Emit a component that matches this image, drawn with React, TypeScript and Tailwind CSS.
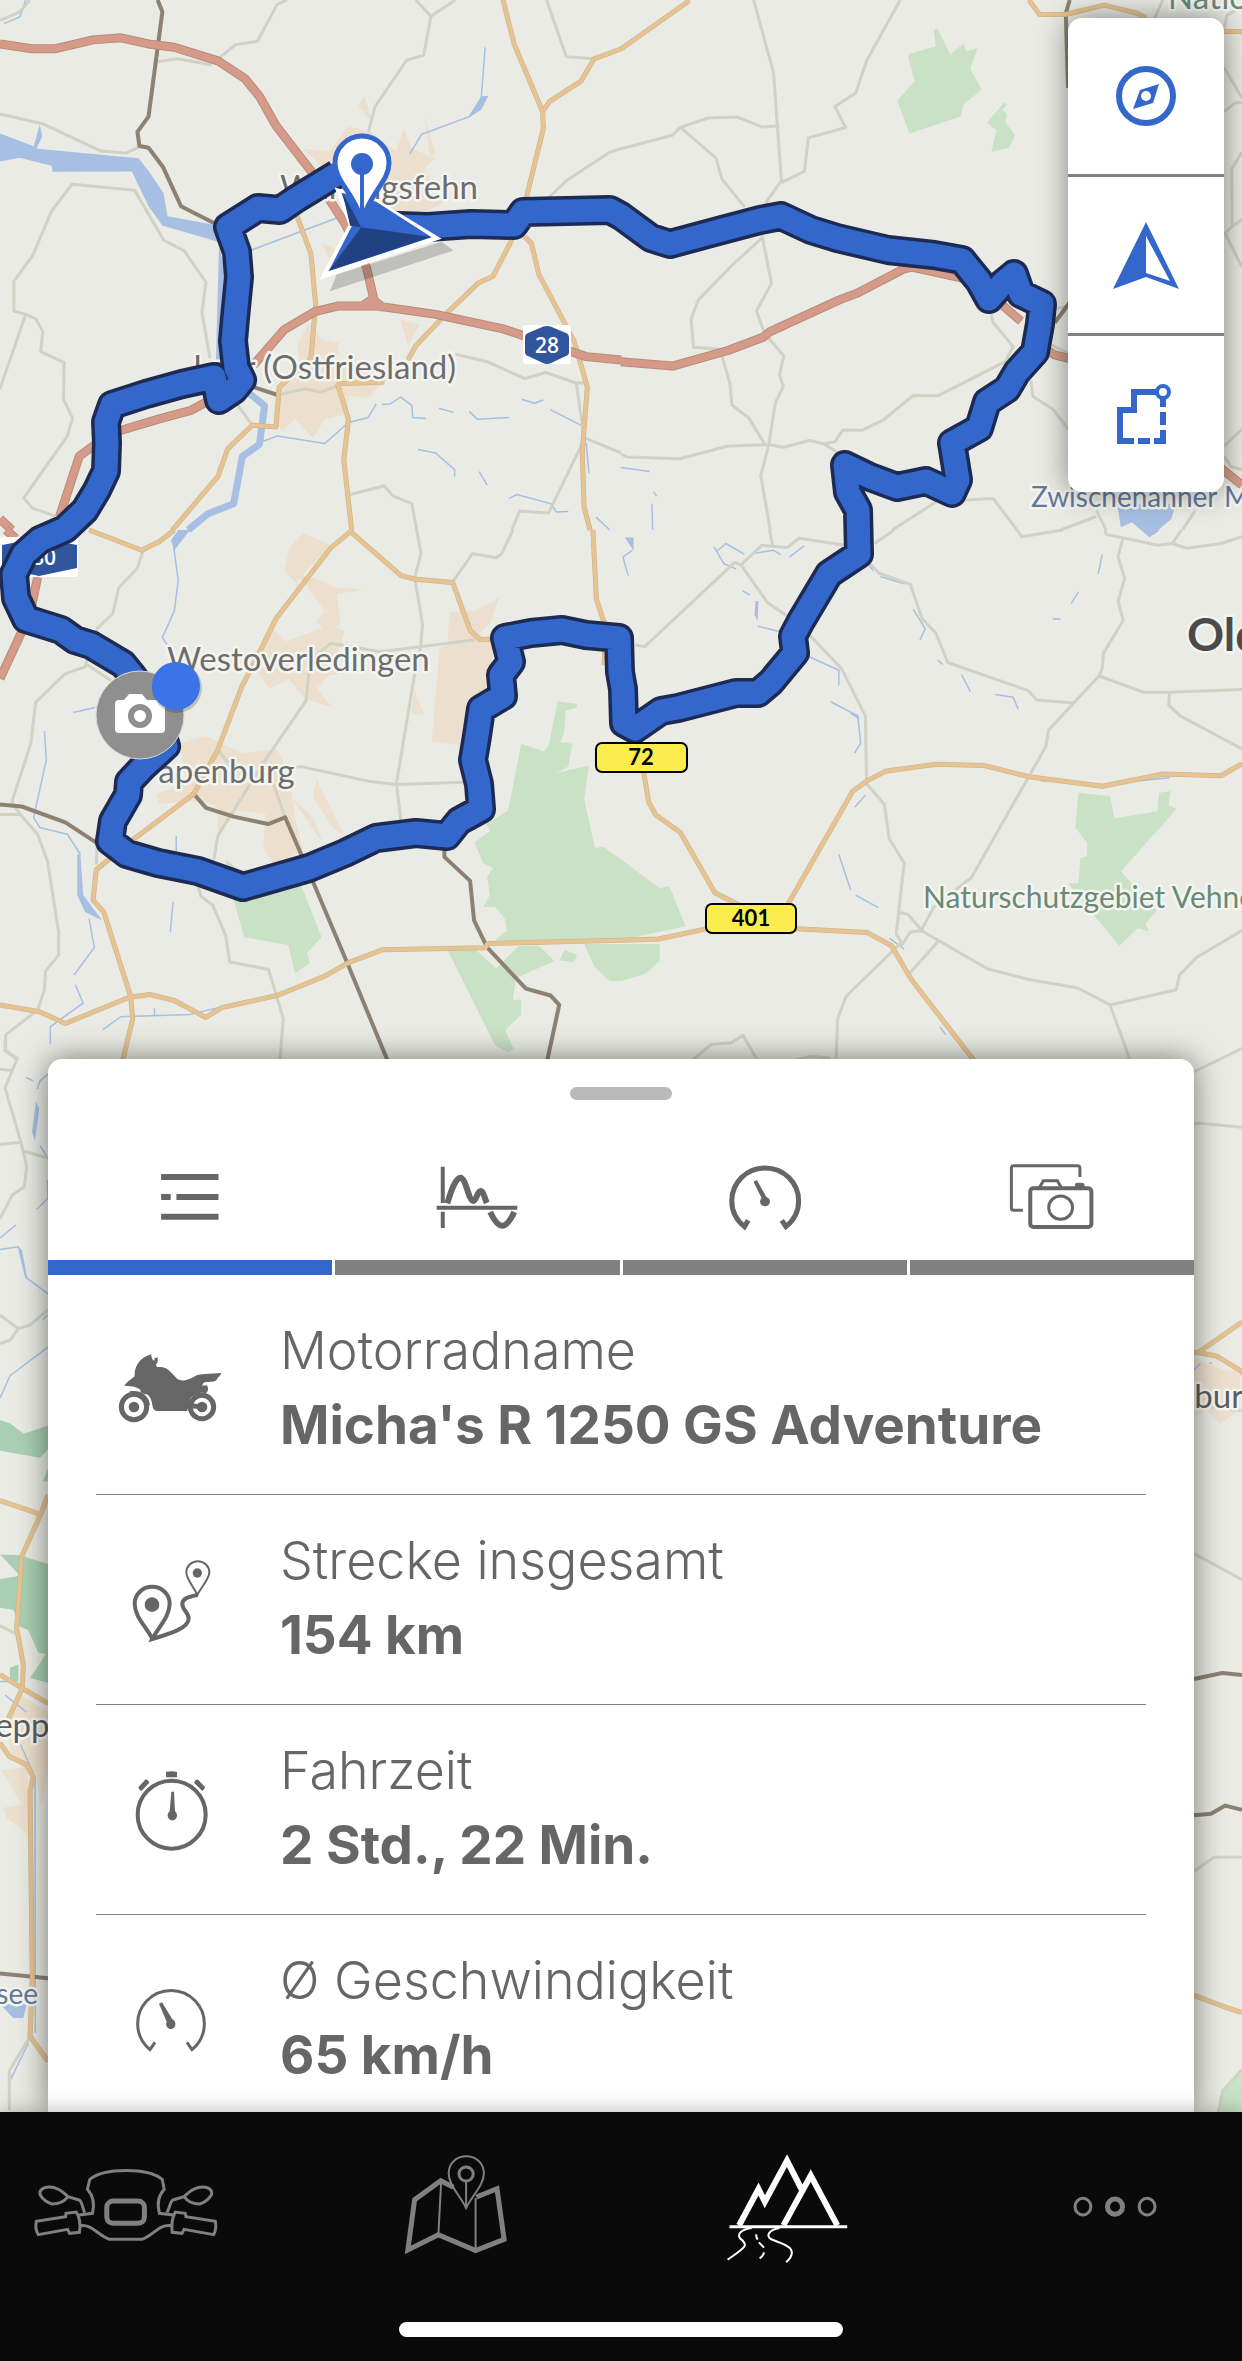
import type { ReactNode } from "react";

const NSS = "[&_*]:[vector-effect:non-scaling-stroke]";

const ROUTE =
  "M337 174L296 199L280 210L258 208L228 227L237 252L239 277L235 318L233 341L236 368L242 380L234 390L219 400L214 377L182 384L146 394L112 405L106 422L107 443L106 471L97 490L85 510L65 529L40 540L24 554L14 574L16 598L26 619L61 630L75 640L91 645L123 664L132 675L150 700L166 746L143 767L129 782L128 795L113 821L110 841L127 854L158 863L198 871L243 887L309 868L345 853L376 838L416 833L447 836L459 821L481 809L479 784L473 760L477 736L481 709L503 696L501 675L511 662L505 638L531 633L562 630L586 635L619 638L620 672L623 689L624 723L635 729L661 711L678 708L736 693L758 693L771 682L795 653L793 636L801 621L829 574L859 554L858 510L848 492L845 465L870 477L897 487L926 481L952 493L958 480L952 443L979 428L987 402L1007 389L1017 372L1035 352L1040 324L1042 304L1021 294L1014 274L1003 283L989 299L979 281L962 260L934 255L888 250L837 238L811 230L781 216L760 220L722 230L670 244L651 238L621 216L610 210L523 212L514 225L471 224L428 227L370 225";

type Tile = {
  transform: string;
  forest?: string;
  urban?: string;
  lake?: string;
  water?: string;
  river?: string;
  minor?: string;
  tan?: string;
  rail?: string;
  motorway?: string;
  forestFill?: string;
};

const TILES: Tile[] = [
  {
    transform: "scale(.39605 .33802)",
    urban:
      "M880 375L935 390L1000 450L1020 380L1040 440L1098 467L1070 500L1120 600L1080 625L1000 625L960 600L840 520L765 440L830 450ZM780 960L815 1005L855 1015L850 1080L925 1095L1030 1065L970 1130L925 1178L880 1170L875 1225L820 1240L790 1295L745 1240L712 1275L690 1240L710 1120L760 1100L750 1020ZM1010 945L1060 960L1030 1020ZM920 285L940 360L905 315ZM815 720L850 740L830 765ZM1072 345L1100 455L1085 460Z",
    lake: "M0 395L90 435L95 440L350 468L378 510L413 572L423 640L540 665L550 715L410 667L375 610L333 507L133 508L130 490L50 467L0 478ZM85 435L100 370L107 402L92 440ZM553 730L575 830L562 1070H545ZM1215 285L1233 283L1215 325L1185 347Z",
    river: "M625 1160L668 1200L655 1315L612 1350L590 1490L525 1520L475 1568",
    water:
      "M630 742L850 645M655 1310L700 1290L820 1312L880 1250L930 1235L950 1195M965 1197L985 1195L1012 1175L1040 1200L1042 1235L1075 1238M1185 1217L1205 1240L1285 1235M1318 1182L1350 1193L1372 1183M1390 1212L1470 1260M1285 1475L1305 1463L1390 1490L1405 1515L1435 1513M1055 1330L1100 1340L1148 1390V1410M1210 1395L1230 1435M1225 140L1215 290L1185 345L1065 397L1035 455M1108 1208L1145 1220M1480 1310L1487 1400M10 70L50 50L65 0M1505 1530L1540 1568",
    minor:
      "M0 337L110 367L255 447L318 453L350 435M0 1150L65 930L35 920L35 832L82 757L130 625L182 545L340 563L413 710L465 742L520 835L510 925L530 1060M65 930L90 943L108 980L103 1040L162 1073L160 1180L183 1237L170 1290L60 1473L82 1503L140 1527M1050 0L1088 48L1150 0M1088 48L1070 163L1027 178L947 315L930 390M725 0L700 13L650 122L595 132L550 175M395 183L450 174L535 192M1380 0L1430 168L1500 174M1568 440L1540 450L1430 535L1385 585M1150 1048L1230 1070L1325 1120L1378 1102L1455 1133L1478 1133M1455 1133L1475 1295L1568 1340M1475 1300L1385 1518L1312 1512L1292 1568M885 1463L970 1437L992 1467L1040 1490L1052 1568M595 1190L635 1255M705 1168L770 1150L810 1160L855 1140M0 60L50 35L75 0",
    rail: "M398 0L410 35L375 345L347 390L352 432L375 437L412 495L457 610L540 660M640 1145L705 1170",
    tan: "M1270 0L1298 130L1370 330L1372 380L1328 590L1290 715L1245 817L1208 837L1125 930L1050 1023L1030 1065M1370 330L1388 300L1467 240L1500 174L1568 145M1325 700L1342 720L1360 810L1450 1010L1483 1145L1470 1340L1475 1500L1490 1568M750 640L785 750L797 900L785 1060L705 1145L697 1263L637 1258L575 1328L550 1410L435 1568M850 1135L970 1130M852 1135L880 1240L868 1360L888 1568",
    motorway:
      "M0 130L80 144L140 144L235 118L305 112L375 130L440 140L550 180L618 232L655 285L697 372L785 505L870 660L925 790L948 905M915 905L940 885L970 912M640 1080L718 975L795 922L855 905L950 905L1100 930L1270 973L1480 1055L1568 1065M150 1530L200 1350L240 1315L300 1275L400 1240L480 1215L520 1190M0 1535L30 1568",
  },
  {
    transform: "translate(621 0) scale(.39605 .33802)",
    forest:
      "M798 83L832 162L865 128L872 152L900 143L882 205L911 265L865 310L857 345L728 395L698 297L742 240L725 170L728 160L795 137L790 90ZM968 302L975 310L962 325L975 337L970 362L995 400L980 437L935 450L948 385L924 363Z",
    lake: "M1253 1490H1400L1390 1535L1335 1590L1290 1545L1262 1560Z",
    water: "M0 1383L72 1395M78 1490L80 1568M82 1455L90 1468",
    minor:
      "M335 0L385 215L405 535L365 600M705 0L620 180L593 275L540 315L567 377L473 408L463 507L405 540M0 440L130 400L150 377L220 349L292 346L358 376L400 372M150 377L240 468L255 530L312 612M355 690L380 838L342 920L362 985L411 1053L400 1110L410 1143L390 1190L373 1315L353 1408L377 1568M355 705L280 785L195 888L177 943L183 1027L250 1033L275 1135L280 1198L323 1237L362 1312M0 1343L15 1352L148 1357L268 1320L373 1315L410 1323L476 1303L512 1313L555 1345M512 1313L540 1307L560 1272L608 1273L662 1243L738 1170L800 1171L970 1070L990 1025L940 955L935 930M1035 1125L1040 1173L1090 1210L1130 1270M685 1568L795 1485M860 1480L940 1475L1000 1568M1110 1568L1200 1528M1200 1510L1225 1568M1523 200L1568 290M1523 330L1550 305L1568 303M1568 450L1542 500L1543 670L1525 690L1568 790M1543 670L1568 650M1523 1320L1568 1270M1523 1350L1540 1380L1568 1390M1450 1510L1418 1568M1368 0L1345 60M1523 85L1530 45L1568 20M1020 970L1050 1000L1130 1045M1090 915L1130 905",
    tan: "M0 145L165 8L172 0M1030 0L1057 43L1125 42L1220 15L1300 38L1325 53M1523 93H1568",
    rail: "M1133 0L1123 40L1129 260M1133 895L1095 955",
    motorway:
      "M0 1070L130 1083L270 1037L360 997L375 982L550 888L595 868L715 795L735 790L870 825M965 905L1010 950M1075 1035L1095 1050L1135 1062M1515 1385L1568 1435",
  },
  {
    transform: "translate(0 530) scale(.39605 .33802)",
    forest:
      "M570 975L613 1015L760 1050L812 1205L775 1250L782 1280L745 1312L728 1228L617 1205L590 1095ZM1408 507L1457 515L1455 525L1428 535L1424 600L1415 628L1445 632L1435 700L1405 720L1487 697L1475 795L1502 940L1525 938L1568 975L1666 1060L1690 1053L1731 1172L1560 1215L1250 1215L1280 1185L1275 1150L1250 1115L1220 1115L1237 1080L1230 1025L1245 1000L1220 985L1198 925L1237 890L1228 870L1283 830L1316 632L1372 655L1385 640ZM1130 1243L1165 1245L1200 1240L1253 1297L1310 1230L1360 1230L1400 1275L1303 1325L1295 1390H1316L1315 1435L1275 1480L1297 1535L1283 1545L1250 1525ZM1475 1225H1666V1275L1630 1312L1568 1335H1540L1500 1290ZM1425 1243L1457 1255L1450 1278L1413 1273Z",
    urban:
      "M765 8L835 45L750 150L765 180L718 120L730 55ZM680 280L720 330L790 300L840 280L870 300L860 340L840 390L890 420L830 430L800 470L840 525L770 500L730 440L680 470L640 400ZM750 130L800 145L850 170L920 175L850 190L860 280L820 300L800 270L820 240ZM1135 245L1200 240L1260 200L1240 270L1210 310L1250 330L1240 400L1230 490L1185 540L1160 635L1090 628L1110 350L1130 340ZM1045 470L1070 545L1040 545ZM455 630L520 610L610 660L700 650L730 720L745 850L765 950L690 990L665 940L670 840L600 830L550 900L548 820L510 800L400 810L395 780L470 750ZM800 740L870 905L840 880L790 790ZM735 790L815 925L790 850Z",
    lake: "M203 960L210 1080L258 1155L215 1130L195 1080V960ZM480 0L440 60L432 30L450 0Z",
    water:
      "M437 35L450 150L440 240L410 318L425 345M185 540L240 525M112 595L117 680L85 850L100 880L170 900L203 960M225 1150L238 1235L187 1317M190 1345L210 1400L150 1450L127 1470V1520M260 1478L305 1440L480 1433L570 1408M445 905V950M437 1100L430 1190M390 1415V1435",
    minor:
      "M360 65L347 113L300 170L285 247L245 292L215 405L165 425L90 510L78 630L30 805L50 840L95 900L120 980L148 1190V1257L115 1305L112 1360L95 1420L15 1493L12 1540L45 1568M215 395L280 445M0 842H50M1052 0L1063 70L1047 140L1067 280L1062 345L1045 440L1001 750L1012 860M1295 0L1267 70L1253 82L1193 70L1145 150M1200 325L960 360L835 335L800 370L780 420L773 505L670 680L550 905L540 975M500 1050L507 1083L537 1110L570 1200L580 1278L678 1300L715 1445L707 1568M690 750L720 850M660 720L760 700L930 743L1001 753L1170 746M550 650L590 710M245 940L243 990",
    tan: "M225 0L358 60L402 35L440 0M885 5L835 53L697 262L660 350L610 465L550 650L490 780L345 908L285 965L243 1005L235 1095L262 1130L330 1380L335 1447L310 1568M885 5L1013 135L1050 146L1143 155L1187 297L1213 325L1250 322M1497 0L1506 205L1530 290L1525 400M0 1405L100 1425L165 1460L325 1383L377 1374L440 1392L520 1442L560 1413L700 1377L820 1320L880 1280L965 1242L1225 1236L1232 1223L1568 1214",
    rail: "M0 812L55 818L165 865L250 930M485 775L520 822L590 848L677 870L720 850L790 1040L880 1290L978 1568M1122 945V967L1187 1038L1197 1155L1230 1235L1328 1357L1390 1377L1412 1405L1382 1568",
    motorway: "M95 140L75 250L0 440M15 0L40 25",
  },
  {
    transform: "translate(621 530) scale(.39605 .33802)",
    forest:
      "M1155 778L1235 787L1246 853L1355 832L1358 778L1387 772L1383 815L1403 825L1262 1010L1352 1125L1325 1165L1333 1188L1305 1178L1258 1230L1180 1120L1130 1045H1155L1160 970L1177 965V925L1147 880Z",
    lake: "M1315 0H1360L1345 15ZM620 100L635 110L638 125ZM575 540L595 545L600 560ZM340 210H347L345 270L337 250ZM10 22H32V62Z",
    water:
      "M345 285L400 300M235 50L260 100L290 115M240 65L265 40L312 72M330 70L385 60L403 73M425 80L462 47M655 138L717 160M738 235L768 292L755 325M475 375L550 415V460M530 508L598 550L605 630L590 660M860 428L882 478M945 487L990 495L1003 530M550 960L580 1065M592 1080L650 1117M590 820L617 785M1215 72L1205 130M1155 183L1137 217M678 1208L715 1240M805 1470L820 1493M1310 742L1385 733M1060 742H1110M28 60L5 80L18 135M1090 263H1110M307 180L325 192M800 385L812 398",
    minor:
      "M375 0L383 47M565 45L450 24L420 52L355 46L303 103L287 96L60 345L37 340M303 103L370 215L425 258M475 310L557 410L617 550L620 750L665 812L677 913L715 985L695 1195L708 1220L568 1380L547 1445L543 1568M620 90L652 128L730 160L760 262L795 305L825 392L1028 475L1050 503L1143 512L1207 432L1215 410L1218 365L1268 268L1255 210L1272 143L1255 80L1267 25M640 40L690 0M1000 0L1012 20L1115 0M1222 0L1225 13L1267 23L1355 45L1392 40L1428 54L1515 40L1568 20M1392 40L1415 0M1207 432L1320 480H1385L1568 472M1385 480L1383 518L1412 550L1568 648M1143 512L1080 592L1073 640L885 1028L850 1060L790 1115L758 1185L925 1298L1030 1330L1153 1355L1235 1405L1402 1360L1410 1317L1455 1263L1568 1185M1235 1405L1295 1600M700 1130L725 1138L760 1185L730 1190L705 1235M800 1218L730 1310M180 1568L228 1522L278 1517L308 1495L350 1580M440 1568L480 1557L530 1563",
    tan: "M57 715L70 805L88 843L150 895L237 1073L300 1110M420 1110L585 773L620 743L667 714L795 693L918 697L1030 730L1215 758L1370 722L1515 727L1568 692M0 1214L95 1210L215 1180M443 1180L622 1191L683 1230L733 1330L895 1575M25 610V640",
  },
  {
    transform: "translate(1040 1300) scale(.33333 .5102)",
    urban: "M462 115L520 130L565 140L600 135V215L540 243L500 215L462 230Z",
    forest: "M606 1508L548 1550L530 1610H606Z",
    water: "M462 137L480 125M508 124H516M595 138L606 147",
    minor: "M462 497L606 548M462 1120L522 1092H606M606 1508L548 1550L530 1610M462 205L606 217",
    tan: "M462 103L475 103L606 43M475 103L530 110L606 140M462 1363L560 1387L606 1397",
    rail: "M462 743L547 731L606 735M462 1010L513 1007L556 991L606 999",
  },
  {
    transform: "translate(600 1040) scale(.40945 .33333)",
    minor: "M1440 102L1568 25M1440 252L1465 250L1568 262",
  },
  {
    transform: "translate(0 1040) scale(.33333 .68240)",
    forestFill: "fill-[#aad0b3]",
    forest:
      "M0 557L30 562L72 577L144 565V600L120 612L0 602ZM0 754L60 755L144 768V900L115 898L85 865L60 860L40 835L0 832V790L60 785ZM30 920L55 915V940L30 938ZM90 935L144 895V942ZM128 647L144 628V647Z",
    urban:
      "M60 960L144 985V1075L130 1110L120 1120L110 1075L80 1062L30 1050L25 1000ZM5 1070L80 1065L85 1165L20 1140L10 1125L65 1120Z",
    lake: "M0 1413H80L70 1433H40ZM108 90L118 100L105 148L96 135ZM55 303L66 308L82 350L75 345Z",
    water:
      "M0 525L30 492L144 450M0 307L55 303L78 348L144 372M0 290L48 271M78 55L100 60M110 248L144 232L142 205M120 155L144 173M15 960L80 985M50 1020L105 1080L106 1455M30 1525L85 1470M0 940L40 940M112 72L120 60L144 50M128 410L144 403",
    minor:
      "M15 0L17 15L52 27L15 70L63 150L80 185L73 215L37 227L0 262M65 162L144 173M0 153L63 150M0 43L40 45M0 403L55 423L90 418L144 395M0 445L30 440L55 423M0 858L45 870M28 1568V1510L88 1462",
    tan: "M0 675L122 695L144 667M122 695L65 757L50 862L70 915L67 950L20 1000M0 930L67 950L144 972M0 1030L28 1050L80 1062L100 1080L90 1100L97 1375L90 1460L144 1497",
    rail: "M0 1368L144 1375",
  },
];

const LABEL =
  "font-['Lato',sans-serif] stroke-[#f4f5f1] stroke-[5px] [paint-order:stroke] [stroke-linejoin:round]";

function RouteMap() {
  return (
    <svg
      className="absolute inset-0 h-full w-full bg-[#e9ebe4]"
      viewBox="0 0 1242 2361"
      preserveAspectRatio="xMidYMin slice"
      role="img"
      aria-label="Karte mit aufgezeichneter Route"
    >
      <g className={NSS} fill="none" strokeLinejoin="round">
        {TILES.map((t) => (
          <g key={t.transform} transform={t.transform}>
            <path d={t.urban} className="fill-[#ecdfcd]" />
            <path d={t.forest} className={t.forestFill ?? "fill-[#c9e1c5]"} />
            <path d={t.lake} className="fill-[#a6bfe3]" />
            <path d={t.river} className="stroke-[#a6bfe3]" strokeWidth="7" />
            <path d={t.water} className="stroke-[#a6bfe3]" strokeWidth="1.5" />
          </g>
        ))}
        {TILES.map((t) => (
          <g key={t.transform} transform={t.transform}>
            <path d={t.minor} className="stroke-[#d0d2c5]" strokeWidth="3" />
            <path d={t.rail} className="stroke-[#8d8174]" strokeWidth="4" />
            <path d={t.tan} className="stroke-[#cfb287]" strokeWidth="5" />
            <path d={t.tan} className="stroke-[#e5c392]" strokeWidth="4" />
            <path d={t.motorway} className="stroke-[#b88b7b]" strokeWidth="9" />
            <path d={t.motorway} className="stroke-[#d59b88]" strokeWidth="7" />
          </g>
        ))}
      </g>

      <g>
        <rect x="523" y="325" width="48" height="39" rx="3" fill="#fff" />
        <path d="M547 326Q551 326 554 328L566 333Q569 334 569 338V352Q569 355 566 356L551 363Q547 365 543 363L528 356Q525 355 525 352V338Q525 334 528 333L540 328Q543 326 547 326Z" fill="#2f559d" />
        <text x="547" y="353" textAnchor="middle" className="fill-white font-['Open_Sans',sans-serif] text-[21px] font-semibold">28</text>
        <rect x="0" y="537" width="78" height="40" rx="3" fill="#fff" />
        <path d="M2 545L39 538L77 545V568L39 576L2 568Z" fill="#2f559d" />
        <text x="38" y="565" textAnchor="middle" className="fill-white font-['Open_Sans',sans-serif] text-[21px] font-semibold">280</text>
      </g>

      <g className={LABEL}>
        <g className="fill-[#6d6d6d] text-[33px]">
          <text x="280" y="199">Warsingsfehn</text>
          <text x="193" y="379">Leer (Ostfriesland)</text>
          <text x="167" y="671">Westoverledingen</text>
          <text x="139" y="783">Papenburg</text>
        </g>
        <text x="923" y="908" className="fill-[#6b8a76] text-[30px]">Naturschutzgebiet Vehnemoor</text>
        <text x="1168" y="9" className="fill-[#6b8a76] text-[33px]">Nationalpark</text>
        <text x="1031" y="507" className="fill-[#647998] text-[28px]">Zwischenahner Meer</text>
        <text x="1187" y="651" className="fill-[#4b4b4b] text-[46px] font-bold">Oldenburg</text>
        <text x="-35" y="1737" className="fill-[#5c5c5c] text-[33px]">Meppen</text>
        <text x="1260" y="1408" textAnchor="end" className="fill-[#5c5c5c] text-[33px]">Cloppenburg</text>
        <text x="38" y="2004" textAnchor="end" className="fill-[#647998] text-[28px]">Speichersee</text>
      </g>

      <path d={ROUTE} fill="none" stroke="#1c2a54" strokeWidth="30" strokeLinejoin="round" />
      <path d={ROUTE} fill="none" stroke="#3367cc" strokeWidth="23" strokeLinejoin="round" strokeLinecap="round" />

      <g className="fill-[#fbec4e] stroke-black stroke-2">
        <rect x="596" y="743" width="91" height="29" rx="6" />
        <rect x="706" y="904" width="90" height="29" rx="6" />
      </g>
      <g textAnchor="middle" className="fill-black font-['Lato',sans-serif] text-[22px] font-bold">
        <text x="641" y="765">72</text>
        <text x="751" y="926">401</text>
      </g>

      <g transform="scale(.39605 .33802)">
        <path d="M850 812L1115 715L1145 741L833 862Z" fill="#000" fillOpacity=".18" />
        <path d="M845 555L880 665L806 828L1115 706L945 585Z" fill="#fff" />
        <path d="M862 570L890 665L830 802L1090 702L950 597Z" fill="#3367cc" />
        <path d="M912 672L1088 701L830 802Z" fill="#204283" />
        <path d="M865 570L884 668L912 672Z" fill="#204283" />
      </g>
      <path d="M361 218C353 192 335 181 335 163A27 27 0 0 1 389 163C389 181 371 192 363 218Z" fill="#fff" stroke="#3367cc" strokeWidth="5" />
      <circle cx="362" cy="164" r="11" fill="#3367cc" />
      <path d="M362 164V214" stroke="#3367cc" strokeWidth="4" />

      <circle cx="140" cy="715" r="44" fill="#8f8f8f" stroke="#d9d9d9" />
      <path d="M119 700H124L129 694H142L147 700H161A4 4 0 0 1 165 704V729A4 4 0 0 1 161 733H119A4 4 0 0 1 115 729V704A4 4 0 0 1 119 700Z" fill="#fff" />
      <circle cx="140" cy="716" r="9" fill="#fff" stroke="#8f8f8f" strokeWidth="6" />
      <circle cx="177" cy="688" r="25" fill="#000" fillOpacity=".18" />
      <circle cx="176" cy="686" r="24" fill="#3b74e8" />
    </svg>
  );
}

const TOOLS: { label: string; icon: ReactNode }[] = [
  {
    label: "Kompass",
    icon: (
      <g>
        <circle cx="40" cy="40" r="27" fill="none" stroke="#3367cc" strokeWidth="6" />
        <path fillRule="evenodd" d="M53 28L47 47L27 53L34 34ZM40 35A5 5 0 1 0 40 45A5 5 0 1 0 40 35Z" fill="#3367cc" />
      </g>
    ),
  },
  {
    label: "Position",
    icon: (
      <path fillRule="evenodd" d="M40 7L73 74L40 62L7 74ZM40 21V58L64 66Z" fill="#3367cc" />
    ),
  },
  {
    label: "Route",
    icon: (
      <g fill="none" stroke="#3367cc" strokeWidth="6">
        <path d="M28 67H14V36H28V18H50" />
        <circle cx="57" cy="18" r="6" strokeWidth="4" />
        <path d="M57 25V33M57 38V51M57 56V67H48M44 67H32" />
      </g>
    ),
  },
];

function Toolbar() {
  return (
    <div className="absolute top-[18px] right-[18px] flex w-[156px] flex-col divide-y-[3px] divide-[#808080] overflow-hidden rounded-[14px] bg-white shadow-[0_0_30px_rgba(0,0,0,0.45)]">
      {TOOLS.map((t) => (
        <button key={t.label} type="button" aria-label={t.label} className="box-content flex h-[156px] items-center justify-center">
          <svg className="size-20" viewBox="0 0 80 80">{t.icon}</svg>
        </button>
      ))}
    </div>
  );
}

const TABS: { label: string; box: string; icon: ReactNode }[] = [
  {
    label: "Übersicht",
    box: "246 348 251 240",
    icon: <path d="M296 411H446M296 471H321M336 471H446M296 530H446" strokeWidth="6" />,
  },
  {
    label: "Höhenprofil",
    box: "995 348 251 240",
    icon: (
      <g>
        <path d="M1031 380V489M1031 515V564M1015 503H1226" strokeWidth="4" />
        <path d="M1043 490C1055 440 1068 413 1077 413C1092 413 1098 483 1111 483C1119 483 1121 453 1130 453C1137 453 1141 475 1146 489M1155 516C1166 543 1176 557 1186 557C1197 557 1207 543 1218 516" strokeWidth="6" />
      </g>
    ),
  },
  {
    label: "Geschwindigkeit",
    box: "285 348 234 240",
    icon: (
      <g>
        <path d="M361 541L352 560C333 541 321 515 321 483C321 428 357 384 402 384C448 384 484 428 484 483C484 515 472 541 453 560L443 541" strokeWidth="5" />
        <path d="M374 425L382 420L407 474L396 480Z" className="fill-[#666]" stroke="none" />
        <ellipse cx="402" cy="485" rx="12" ry="14" className="fill-[#666]" stroke="none" />
      </g>
    ),
  },
  {
    label: "Fotos",
    box: "986 348 234 240",
    icon: (
      <g>
        <path d="M1032 511H1010Q1004 511 1004 504V384Q1004 377 1010 377H1165Q1171 377 1171 384V411M1072 443L1082 422H1116L1126 443" strokeWidth="3" />
        <rect x="1050" y="445" width="149" height="116" rx="8" ry="9" strokeWidth="4" />
        <ellipse cx="1124" cy="503" rx="29" ry="35" strokeWidth="3" />
        <path d="M1160 442V434Q1160 430 1163 430H1178Q1181 430 1181 434V442Z" className="fill-[#666]" />
      </g>
    ),
  },
];

const ROWS: { label: string; value: string; box: string; icon: ReactNode }[] = [
  {
    label: "Motorradname",
    value: "Micha's R 1250 GS Adventure",
    box: "108 132 330 270",
    icon: (
      <g className="fill-[#666]" stroke="none">
        <path d="M134 261C137 250 152 243 164 232C163 205 175 178 213 166L217 181L223 186L224 178L233 175V189L228 197L231 204C253 203 263 209 272 219L290 238C300 248 318 248 352 228C370 224 395 224 422 222C427 226 416 231 411 240C409 247 401 249 378 249C370 250 367 255 367 260L381 259C386 268 385 278 378 283C366 277 340 285 330 300L322 336H236C222 336 219 330 217 318C214 298 207 285 194 285C188 283 180 280 181 272C168 262 150 260 134 261Z" />
        <circle cx="162" cy="324" r="38" fill="none" stroke="#666" strokeWidth="5" />
        <circle cx="162" cy="324" r="16" />
        <circle cx="366" cy="324" r="35" fill="#fff" stroke="#666" strokeWidth="5" />
        <circle cx="366" cy="324" r="16" />
        <path d="M330 312L370 317V331L330 328Z" />
        <path d="M149 285V277C180 272 205 285 210 318L204 322C198 295 180 283 149 285Z" />
      </g>
    ),
  },
  {
    label: "Strecke insgesamt",
    value: "154 km",
    box: "108 763 330 270",
    icon: (
      <g>
        <path d="M217 1021C200 985 164 955 164 915A52 50 0 0 1 269 915C269 955 235 985 217 1021C260 1008 326 990 326 960C326 940 307 935 307 915C307 898 330 894 351 889" strokeWidth="4" />
        <path d="M352 889C342 865 319 842 319 821A33 32 0 0 1 388 821C388 842 363 865 352 889Z" strokeWidth="2" />
        <circle cx="216" cy="918" r="22" className="fill-[#666]" stroke="none" />
        <circle cx="352" cy="823" r="14" className="fill-[#666]" stroke="none" />
      </g>
    ),
  },
  {
    label: "Fahrzeit",
    value: "2 Std., 22 Min.",
    box: "108 193 330 270",
    icon: (
      <g>
        <circle cx="275" cy="348" r="102" strokeWidth="4" />
        <path d="M274 279H282L285 338A14 15 0 1 1 269 338ZM258 219Q274 216 291 219V236H258ZM175 266L197 242Q205 243 208 252L184 277Q177 274 175 266ZM342 252Q345 243 353 242L375 265Q374 273 367 277Z" className="fill-[#666]" stroke="none" />
      </g>
    ),
  },
  {
    label: "Ø Geschwindigkeit",
    value: "65 km/h",
    box: "108 823 330 270",
    icon: (
      <g>
        <path d="M225 1031L210 1053A100 100 0 1 1 336 1053L321 1031" strokeWidth="3" />
        <path d="M237 915L246 911L277 962A14 15 0 1 1 260 969Z" className="fill-[#666]" stroke="none" />
      </g>
    ),
  },
];

function TripPanel() {
  return (
    <section className="relative rounded-t-[14px] bg-white shadow-[0_0_30px_rgba(0,0,0,0.5)]">
      <div className="flex h-14 items-center justify-center pt-[14px]">
        <button type="button" aria-label="Ansicht verkleinern" className="mb-[2px] h-[13px] w-[102px] rounded-full bg-[#b9b9b9]" />
      </div>
      <div role="tablist" className="grid grid-cols-4 gap-[3px]">
        {TABS.map((t, i) => (
          <button
            key={t.label}
            type="button"
            role="tab"
            aria-label={t.label}
            aria-selected={i === 0}
            className="flex flex-col items-center border-b-[15px] border-[#808080] pt-[41px] pb-6 aria-selected:border-[#3367cc]"
          >
            <svg className={`h-20 w-24 ${NSS}`} viewBox={t.box} preserveAspectRatio="none" fill="none" stroke="#666">
              {t.icon}
            </svg>
          </button>
        ))}
      </div>
      <dl className="mx-12 pt-[10px] font-['Inter',sans-serif] text-[52px] leading-[75px] text-[#666]">
        {ROWS.map((r) => (
          <div key={r.label} className="flex items-center gap-[34px] border-b border-[#808080] pt-7 pb-[31px] last:border-0 last:pb-[19px]">
            <div className="flex w-[150px] shrink-0 justify-center">
              <svg className={`h-[90px] w-[110px] ${NSS}`} viewBox={r.box} fill="none" stroke="#666" aria-hidden="true">
                {r.icon}
              </svg>
            </div>
            <div className="min-w-0">
              <dt className="font-light">{r.label}</dt>
              <dd className="text-[53px] leading-[75px] font-bold">{r.value}</dd>
            </div>
          </div>
        ))}
      </dl>
    </section>
  );
}

const NAV: { label: string; box: string; icon: ReactNode; active?: boolean }[] = [
  {
    label: "Cockpit",
    box: "66 135 505 360",
    icon: (
      <g strokeWidth="3">
        <rect x="270" y="303" width="95" height="67" rx="17" ry="18" strokeWidth="5" />
        <path d="M200 345L234 340C240 310 234 285 221 268L227 238C265 203 372 203 410 238L415 268C402 285 396 310 403 340L438 345" />
        <path d="M203 377C235 373 245 405 277 418H359C390 405 400 373 432 377" />
        <path d="M214 338C208 320 207 302 200 300L172 290C163 280 150 261 125 261C108 261 98 272 102 285C108 297 120 308 132 312C150 312 163 305 172 290M422 338C430 320 430 304 437 300L465 290C474 280 487 261 512 261C529 261 538 272 534 285C528 297 516 308 504 312C486 312 474 305 465 290" />
        <path d="M97 404C90 390 90 375 92 364L166 350L167 340L193 336C203 355 204 375 201 397L176 400L171 388ZM540 404C546 390 546 375 544 364L470 350L468 340L443 336C434 355 433 375 435 397L460 400L465 388Z" />
      </g>
    ),
  },
  {
    label: "Navigation",
    box: "898 135 505 360",
    icon: (
      <g>
        <path d="M1144 262L1112 242L1046 299L1029 450L1106 404L1200 452L1272 418L1254 266L1202 291" strokeWidth="5" />
        <path d="M1113 245L1106 404M1200 294V452M1176 245V320" strokeWidth="2" />
        <path d="M1176 324C1160 285 1132 255 1132 220C1132 190 1152 169 1176 169C1201 169 1221 190 1221 220C1221 255 1192 285 1176 324Z" strokeWidth="2" />
        <ellipse cx="1176" cy="222" rx="18" ry="21" strokeWidth="3" />
      </g>
    ),
  },
  {
    label: "Touren",
    active: true,
    box: "164 135 505 360",
    icon: (
      <g>
        <path d="M298 376L347 267L363 305L419 182L456 268M410 376L479 227L546 376" strokeWidth="6" />
        <path d="M274 380H571" strokeWidth="3" />
        <path d="M330 384C304 388 292 402 301 416C323 436 316 440 269 479M400 384C374 390 365 406 378 417C400 430 458 440 417 487" strokeWidth="2" />
        <path d="M342 403Q340 410 345 419M348 427L361 443M361 457Q360 467 350 475" strokeWidth="2" />
      </g>
    ),
  },
  {
    label: "Mehr",
    box: "997 135 505 360",
    icon: (
      <g>
        <ellipse cx="1166" cy="320" rx="20" ry="25" strokeWidth="3" />
        <ellipse cx="1247" cy="320" rx="19" ry="23" strokeWidth="5" />
        <ellipse cx="1328" cy="320" rx="20" ry="25" strokeWidth="3" />
      </g>
    ),
  },
];

function BottomNav() {
  return (
    <footer className="relative bg-[#0a0a0a] px-[26px] pt-[33px] pb-6 shadow-[0_0_20px_rgba(0,0,0,0.3)]">
      <nav className="flex justify-between">
        {NAV.map((n) => (
          <button
            key={n.label}
            type="button"
            aria-label={n.label}
            aria-current={n.active ? "page" : undefined}
            className="text-[#808080] aria-[current=page]:text-white"
          >
            <svg className={`block h-[120px] w-[200px] ${NSS}`} viewBox={n.box} preserveAspectRatio="none" fill="none" stroke="currentColor">
              {n.icon}
            </svg>
          </button>
        ))}
      </nav>
      <div className="mx-auto mt-[57px] h-[15px] w-[444px] rounded-full bg-white" />
    </footer>
  );
}

export default function App() {
  return (
    <div className="relative flex min-h-screen flex-col overflow-hidden">
      <RouteMap />
      <main className="relative flex flex-1 flex-col justify-end px-12">
        <Toolbar />
        <TripPanel />
      </main>
      <BottomNav />
    </div>
  );
}
